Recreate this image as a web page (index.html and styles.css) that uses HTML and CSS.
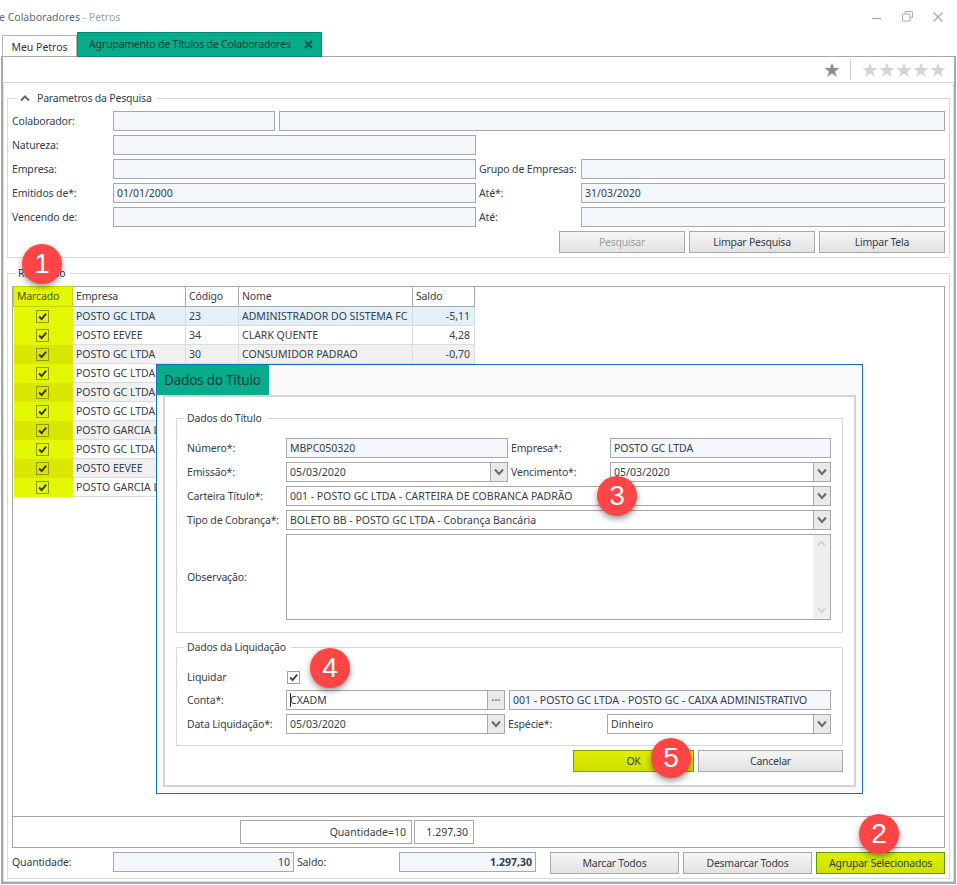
FILE: index.html
```html
<!DOCTYPE html>
<html lang="pt-BR">
<head>
    <meta charset="UTF-8">
    <title>Agrupamento de Títulos de Colaboradores - Petros</title>
    <link rel="stylesheet" href="styles.css">
</head>
<body>
    <svg class="defs" width="0" height="0">
        <symbol id="chev" viewBox="0 0 10 8"><path d="M1 1.500 5 6 9 1.500" fill="none" stroke="currentColor" stroke-width="2"/></symbol>
        <symbol id="check" viewBox="0 0 13 13"><path d="M2.500 6.500 5.500 9.700 10.800 3.200" fill="none" stroke="currentColor" stroke-width="2.200"/></symbol>
        <symbol id="star" viewBox="0 0 16 16"><path d="M8 .8 10 6h5.600l-4.500 3.400 1.700 5.600L8 11.600 3.200 15l1.700-5.600L.4 6H6z" fill="currentColor"/></symbol>
    </svg>

    <div class="titlebar">
        <div class="app-title">e Colaboradores <span class="app-name">- Petros</span></div>
        <div class="win-buttons">
            <svg width="10" height="10" viewBox="0 0 10 10"><path d="M0 6.500h9" stroke="#b0b0b0" stroke-width="1.500"/></svg>
            <svg width="11" height="11" viewBox="0 0 11 11"><path d="M3 2.500V.5h7.500v6H8M.5 3h7.500v7H.5z" fill="none" stroke="#b0b0b0"/></svg>
            <svg width="10" height="10" viewBox="0 0 10 10"><path d="M.5.500l9 9m0-9-9 9" stroke="#b0b0b0" stroke-width="1.500"/></svg>
        </div>
    </div>

    <div class="tabs">
        <div class="tab">Meu Petros</div>
        <div class="tab tab-active">Agrupamento de Títulos de Colaboradores
            <svg width="9" height="9" viewBox="0 0 9 9"><path d="M1 1l7 7m0-7-7 7" stroke="#24504a" stroke-width="2"/></svg>
        </div>
    </div>

    <div class="panel">
        <div class="toolbar">
            <svg class="star star-dark"><use href="#star"/></svg>
            <div class="toolbar-sep"></div>
            <div class="stars">
                <svg class="star"><use href="#star"/></svg>
                <svg class="star"><use href="#star"/></svg>
                <svg class="star"><use href="#star"/></svg>
                <svg class="star"><use href="#star"/></svg>
                <svg class="star"><use href="#star"/></svg>
            </div>
        </div>

        <div class="content">
            <fieldset class="group group-search">
                <legend>
                    <svg class="legend-chev" viewBox="0 0 10 6"><path d="M1 5.500 5 1.500 9 5.500" fill="none" stroke="#666" stroke-width="2"/></svg>
                    Parametros da Pesquisa
                </legend>
                <div class="row">
                    <label class="lbl">Colaborador:</label>
                    <div class="field w162"></div>
                    <div class="field w666 gap1"></div>
                </div>
                <div class="row">
                    <label class="lbl">Natureza:</label>
                    <div class="field w363"></div>
                </div>
                <div class="row">
                    <label class="lbl">Empresa:</label>
                    <div class="field w363"></div>
                    <label class="lbl lbl-right">Grupo de Empresas:</label>
                    <div class="field w364"></div>
                </div>
                <div class="row">
                    <label class="lbl">Emitidos de*:</label>
                    <div class="field w363">01/01/2000</div>
                    <label class="lbl lbl-right">Até*:</label>
                    <div class="field w364">31/03/2020</div>
                </div>
                <div class="row">
                    <label class="lbl">Vencendo de:</label>
                    <div class="field w363"></div>
                    <label class="lbl lbl-right">Até:</label>
                    <div class="field w364"></div>
                </div>
                <div class="row row-buttons">
                    <button class="btn btn-search" disabled>Pesquisar</button>
                    <button class="btn btn-search">Limpar Pesquisa</button>
                    <button class="btn btn-search">Limpar Tela</button>
                </div>
            </fieldset>

            <fieldset class="group group-result">
                <legend class="legend-plain">Resultado</legend>
                <div class="grid">
                    <div class="grid-body">
                        <table class="results">
                            <thead>
                                <tr>
                                    <th class="col-mark">Marcado</th>
                                    <th class="col-emp">Empresa</th>
                                    <th class="col-cod">Código</th>
                                    <th class="col-nome">Nome</th>
                                    <th class="col-saldo">Saldo</th>
                                </tr>
                            </thead>
                            <tbody>
                                <tr class="selected">
                                    <td class="mark"><span class="chk"><svg><use href="#check"/></svg></span></td>
                                    <td>POSTO GC LTDA</td><td>23</td><td>ADMINISTRADOR DO SISTEMA FC</td><td class="num">-5,11</td>
                                </tr>
                                <tr>
                                    <td class="mark"><span class="chk"><svg><use href="#check"/></svg></span></td>
                                    <td>POSTO EEVEE</td><td>34</td><td>CLARK QUENTE</td><td class="num">4,28</td>
                                </tr>
                                <tr class="alt">
                                    <td class="mark"><span class="chk"><svg><use href="#check"/></svg></span></td>
                                    <td>POSTO GC LTDA</td><td>30</td><td>CONSUMIDOR PADRAO</td><td class="num">-0,70</td>
                                </tr>
                                <tr>
                                    <td class="mark"><span class="chk"><svg><use href="#check"/></svg></span></td>
                                    <td>POSTO GC LTDA</td><td></td><td></td><td></td>
                                </tr>
                                <tr class="alt">
                                    <td class="mark"><span class="chk"><svg><use href="#check"/></svg></span></td>
                                    <td>POSTO GC LTDA</td><td></td><td></td><td></td>
                                </tr>
                                <tr>
                                    <td class="mark"><span class="chk"><svg><use href="#check"/></svg></span></td>
                                    <td>POSTO GC LTDA</td><td></td><td></td><td></td>
                                </tr>
                                <tr class="alt">
                                    <td class="mark"><span class="chk"><svg><use href="#check"/></svg></span></td>
                                    <td>POSTO GARCIA LTDA</td><td></td><td></td><td></td>
                                </tr>
                                <tr>
                                    <td class="mark"><span class="chk"><svg><use href="#check"/></svg></span></td>
                                    <td>POSTO GC LTDA</td><td></td><td></td><td></td>
                                </tr>
                                <tr class="alt">
                                    <td class="mark"><span class="chk"><svg><use href="#check"/></svg></span></td>
                                    <td>POSTO EEVEE</td><td></td><td></td><td></td>
                                </tr>
                                <tr>
                                    <td class="mark"><span class="chk"><svg><use href="#check"/></svg></span></td>
                                    <td>POSTO GARCIA LTDA</td><td></td><td></td><td></td>
                                </tr>
                            </tbody>
                        </table>
                    </div>
                    <div class="grid-footer">
                        <div class="sum sum-qty">Quantidade=10</div>
                        <div class="sum sum-val">1.297,30</div>
                    </div>
                </div>
                <div class="totals">
                    <label class="lbl">Quantidade:</label>
                    <div class="field w181 right">10</div>
                    <label class="lbl lbl-saldo">Saldo:</label>
                    <div class="field w137 right bold">1.297,30</div>
                    <button class="btn btn-total">Marcar Todos</button>
                    <button class="btn btn-total">Desmarcar Todos</button>
                    <button class="btn btn-total btn-go">Agrupar Selecionados</button>
                </div>
            </fieldset>
        </div>
    </div>

    <div class="modal">
        <div class="modal-title">Dados do Título</div>
        <div class="modal-body">
            <fieldset class="group group-title">
                <legend class="legend-plain">Dados do Título</legend>
                <div class="row">
                    <label class="lbl lbl-m">Número*:</label>
                    <div class="field w222">MBPC050320</div>
                    <label class="lbl lbl-m lbl-right">Empresa*:</label>
                    <div class="field w221">POSTO GC LTDA</div>
                </div>
                <div class="row">
                    <label class="lbl lbl-m">Emissão*:</label>
                    <div class="field combo w222">05/03/2020<span class="combo-btn"><svg><use href="#chev"/></svg></span></div>
                    <label class="lbl lbl-m lbl-right">Vencimento*:</label>
                    <div class="field combo w221">05/03/2020<span class="combo-btn"><svg><use href="#chev"/></svg></span></div>
                </div>
                <div class="row">
                    <label class="lbl lbl-m">Carteira Título*:</label>
                    <div class="field combo w545">001 - POSTO GC LTDA - CARTEIRA DE COBRANCA PADRÃO<span class="combo-btn"><svg><use href="#chev"/></svg></span></div>
                </div>
                <div class="row">
                    <label class="lbl lbl-m">Tipo de Cobrança*:</label>
                    <div class="field combo w545">BOLETO BB - POSTO GC LTDA - Cobrança Bancária<span class="combo-btn"><svg><use href="#chev"/></svg></span></div>
                </div>
                <div class="row row-memo">
                    <label class="lbl lbl-m">Observação:</label>
                    <div class="field memo w545">
                        <div class="scroll">
                            <svg><use href="#chev"/></svg>
                            <svg><use href="#chev"/></svg>
                        </div>
                    </div>
                </div>
            </fieldset>

            <fieldset class="group group-liq">
                <legend class="legend-plain">Dados da Liquidação</legend>
                <div class="row row-liq">
                    <label class="lbl lbl-m">Liquidar</label>
                    <span class="chk chk-plain"><svg><use href="#check"/></svg></span>
                </div>
                <div class="row">
                    <label class="lbl lbl-m">Conta*:</label>
                    <div class="field combo w219"><span class="caret"></span>CXADM<span class="combo-btn dots">···</span></div>
                    <div class="field w322 gap1">001 - POSTO GC LTDA - POSTO GC - CAIXA ADMINISTRATIVO</div>
                </div>
                <div class="row">
                    <label class="lbl lbl-m">Data Liquidação*:</label>
                    <div class="field combo w219">05/03/2020<span class="combo-btn"><svg><use href="#chev"/></svg></span></div>
                    <label class="lbl lbl-m lbl-right">Espécie*:</label>
                    <div class="field combo w224">Dinheiro<span class="combo-btn"><svg><use href="#chev"/></svg></span></div>
                </div>
            </fieldset>

            <div class="modal-buttons">
                <button class="btn btn-go btn-ok">OK</button>
                <button class="btn btn-cancel">Cancelar</button>
            </div>
        </div>
    </div>

    <div class="badge b1">1</div>
    <div class="badge b2">2</div>
    <div class="badge b3">3</div>
    <div class="badge b4">4</div>
    <div class="badge b5">5</div>
</body>
</html>
```

FILE: styles.css
```css
* {
    box-sizing: border-box;
}

body {
    margin: 0;
    width: 957px;
    height: 885px;
    position: relative;
    overflow: hidden;
    background: #fff;
    color: #36404c;
    font-family: "Noto Sans", Tahoma, sans-serif;
    font-size: 10.5px;
    line-height: 14px;
}

.defs {
    position: absolute;
}

/* window chrome */
.titlebar {
    height: 33px;
    display: flex;
    justify-content: space-between;
    align-items: center;
}

.app-title {
    margin-left: -1px;
    color: #5d6b78;
}

.app-name {
    color: #98a2ab;
}

.win-buttons {
    display: flex;
    gap: 20px;
    margin-right: 14px;
    align-items: center;
}

.tabs {
    height: 23px;
    display: flex;
    align-items: flex-end;
    padding-left: 2px;
}

.tab {
    height: 21px;
    width: 75px;
    padding-top: 4px;
    text-align: center;
    background: #fff;
    border: 1px solid #b4b4b4;
    border-bottom: none;
    color: #333;
}

.tab-active {
    height: 25px;
    width: 245px;
    margin-bottom: -1px;
    padding: 4px 0 0 11px;
    display: flex;
    justify-content: space-between;
    background: #08ab8a;
    border: 1px solid #078a70;
    color: #0e3d36;
    letter-spacing: -0.2px;
    white-space: nowrap;
    position: relative;
}

.tab-active svg {
    margin: 3px 8px 0 0;
}

.panel {
    height: 828px;
    margin: 0 1px;
    border: 1px solid #a8a8a8;
    border-width: 1px 2px 2px;
}

.toolbar {
    height: 26px;
    display: flex;
    align-items: center;
    justify-content: flex-end;
    padding-right: 8px;
    border-bottom: 1px solid #d8d8d8;
}

.star {
    width: 16px;
    height: 16px;
    color: #d4d4d4;
    display: block;
}

.star-dark {
    color: #8e8e8e;
}

.toolbar-sep {
    width: 1px;
    height: 21px;
    background: #d0d0d0;
    margin: 0 11px 0 10px;
}

.stars {
    display: flex;
    gap: 1px;
}

.content {
    height: 799px;
    padding: 8px 3px 0;
    border: 1px solid #dcdcdc;
    border-width: 0 1px 1px;
}

/* group boxes */
.group {
    margin: 0;
    min-width: 0;
    border: 1px solid #d8d8d8;
}

.group legend {
    margin-left: 3px;
    padding: 0 5px;
    height: 14px;
    display: flex;
    align-items: center;
    letter-spacing: -0.2px;
    white-space: nowrap;
}

.group .legend-plain {
    padding: 0 5px 0 3px;
    display: block;
}

.group-title .legend-plain,
.group-liq .legend-plain {
    margin-left: -3px;
}

.legend-chev {
    width: 10px;
    height: 6px;
    margin-right: 7px;
}

.group-search {
    padding: 6px 4px 3px;
    height: 167px;
}

.group-result {
    margin-top: 8px;
    padding: 6px 4px 0;
    height: 613px;
}

.row {
    display: flex;
    height: 20px;
    margin-bottom: 4px;
    align-items: center;
}

.row-buttons {
    height: 22px;
    margin: 0;
    justify-content: flex-end;
    gap: 4px;
}

.row-liq {
    margin-bottom: 3px;
}

.lbl {
    width: 101px;
    flex: none;
    letter-spacing: -0.15px;
    white-space: nowrap;
}

.lbl-right {
    width: 102px;
    margin-left: 3px;
}

.lbl-m {
    width: 99px;
}

.lbl-m.lbl-right {
    width: 99px;
}

/* inputs */
.field {
    height: 20px;
    flex: none;
    padding: 2px 3px;
    background: #f3f6fb;
    border: 1px solid #a8a8a8;
    white-space: nowrap;
    position: relative;
    overflow: hidden;
}

.gap1 { margin-left: 4px; }
.w137 { width: 137px; }
.w162 { width: 162px; }
.w181 { width: 181px; }
.w219 { width: 219px; }
.w221 { width: 221px; }
.w222 { width: 222px; }
.w224 { width: 224px; }
.w322 { width: 322px; }
.w363 { width: 363px; }
.w364 { width: 364px; }
.w545 { width: 545px; }
.w666 { width: 666px; }

.right { text-align: right; }
.bold { font-weight: bold; }

.combo {
    background: #fff;
}

.combo-btn {
    position: absolute;
    top: 0;
    right: 0;
    width: 17px;
    height: 18px;
    background: #e9e9e9;
    border-left: 1px solid #a8a8a8;
    color: #6a6a6a;
    display: flex;
    align-items: center;
    justify-content: center;
}

.combo-btn svg {
    width: 10px;
    height: 8px;
}

.dots {
    font-weight: bold;
    letter-spacing: 0;
}

.caret {
    display: inline-block;
    width: 1px;
    height: 14px;
    margin: 0 -1px -3px 0;
    background: #222;
}

.memo {
    height: 86px;
    background: #fff;
    padding: 0;
}

.row-memo {
    height: 86px;
    margin: 0;
}

.scroll {
    position: absolute;
    top: 0;
    right: 0;
    width: 17px;
    height: 84px;
    background: #efefef;
    color: #d0d0d0;
    padding: 5px 0;
    display: flex;
    flex-direction: column;
    justify-content: space-between;
    align-items: center;
}

.scroll svg {
    width: 9px;
    height: 7px;
}

.scroll svg:first-child {
    transform: scaleY(-1);
}

/* result grid */
.grid {
    height: 562px;
    display: flex;
    flex-direction: column;
    border: 1px solid #a8a8a8;
}

.grid-body {
    flex: 1;
}

.results {
    border-collapse: collapse;
    table-layout: fixed;
    width: 461px;
    margin-top: -1px;
}

.results th,
.results td {
    padding: 0 3px;
    height: 19px;
    font-weight: normal;
    text-align: left;
    white-space: nowrap;
    overflow: hidden;
}

.results th {
    height: 20px;
    padding-bottom: 2px;
    letter-spacing: -0.15px;
    border-right: 1px solid #a8a8a8;
    border-top: 1px solid #a8a8a8;
    border-bottom: 1px solid #a8a8a8;
}

.results td {
    border-right: 1px solid #dcdcdc;
    border-bottom: 1px solid #dcdcdc;
}

.results .col-mark {
    width: 59px;
    background: #e3f700;
    border: 1px solid #c4d600;
    color: #4c5200;
}

.col-emp { width: 113px; }
.col-cod { width: 53px; }
.col-nome { width: 174px; }
.col-saldo { width: 62px; }

.results .num {
    text-align: right;
    padding-right: 4px;
}

.selected td { background: #e3eff9; }
.alt td { background: #f0f0f0; }

.results .mark {
    background: #e3f700;
    border-color: #e3f700;
    padding: 0;
    text-align: center;
}

.results .alt .mark {
    background: #d8e600;
    border-color: #d8e600;
}

.chk {
    display: inline-block;
    width: 13px;
    height: 13px;
    border: 1px solid #8f9c00;
    color: #2f3300;
    vertical-align: middle;
}

.chk svg {
    display: block;
    width: 11px;
    height: 11px;
}

.chk-plain {
    border-color: #a0a0a0;
    color: #444;
    margin-left: 1px;
    width: 13px;
}

.grid-footer {
    height: 31px;
    flex: none;
    border-top: 1px solid #a8a8a8;
    display: flex;
    gap: 2px;
    padding: 3px 0 0 227px;
}

.sum {
    height: 24px;
    padding: 4px 5px;
    border: 1px solid #a8a8a8;
    text-align: right;
}

.sum-qty { width: 172px; }
.sum-val { width: 60px; }

.totals {
    display: flex;
    align-items: flex-start;
    margin-top: 4px;
    line-height: 20px;
}

.totals .field {
    line-height: 14px;
}

.lbl-saldo {
    width: 102px;
    margin-left: 3px;
}

/* buttons */
.btn {
    height: 22px;
    padding: 0;
    font: inherit;
    letter-spacing: -0.25px;
    color: #36404c;
    background: linear-gradient(#f6f6f6, #e2e2e2);
    border: 1px solid #a8a8a8;
}

.btn:disabled {
    color: #a0a0a0;
}

.btn-search {
    width: 126px;
}

.btn-total {
    width: 129px;
    margin-left: 4px;
}

.btn-total:first-of-type {
    margin-left: 14px;
}

.btn-go {
    background: linear-gradient(#dcee00, #cfe000);
    border-color: #5f9a00;
}

.btn-ok {
    width: 121px;
    border-color: #8a9a00;
}

.btn-cancel {
    width: 145px;
}

/* dialog */
.modal {
    position: absolute;
    left: 156px;
    top: 364px;
    width: 707px;
    height: 430px;
    background: #fafafa;
    border: 1px solid #0f73bd;
}

.modal-title {
    width: 112px;
    height: 30px;
    padding: 7px 0 0 7px;
    background: #08ab8a;
    color: #0e3d36;
    font-size: 13.5px;
    letter-spacing: -0.2px;
    line-height: 17px;
    white-space: nowrap;
}

.modal-body {
    height: 392px;
    margin: 0 6px;
    padding: 14px 11px 0;
    background: #fff;
    border: 2px solid #d4d4d4;
}

.group-title {
    height: 222px;
    padding: 13px 11px 0 10px;
}

.group-liq {
    height: 106px;
    margin-top: 7px;
    padding: 13px 11px 0 10px;
}

.modal-buttons {
    display: flex;
    justify-content: flex-end;
    gap: 4px;
    margin-top: 4px;
}

/* numbered callouts */
.badge {
    position: absolute;
    width: 40px;
    height: 40px;
    border-radius: 50%;
    background: #ff4545;
    color: #fff;
    font-family: "Liberation Sans", Arial, sans-serif;
    font-size: 28px;
    line-height: 40px;
    text-align: center;
    box-shadow: 0 3px 6px rgba(0, 0, 0, 0.4);
}

.b1 { left: 22px; top: 244px; }
.b2 { left: 859px; top: 814px; }
.b3 { left: 597px; top: 476px; }
.b4 { left: 310px; top: 648px; }
.b5 { left: 651px; top: 738px; }
```
